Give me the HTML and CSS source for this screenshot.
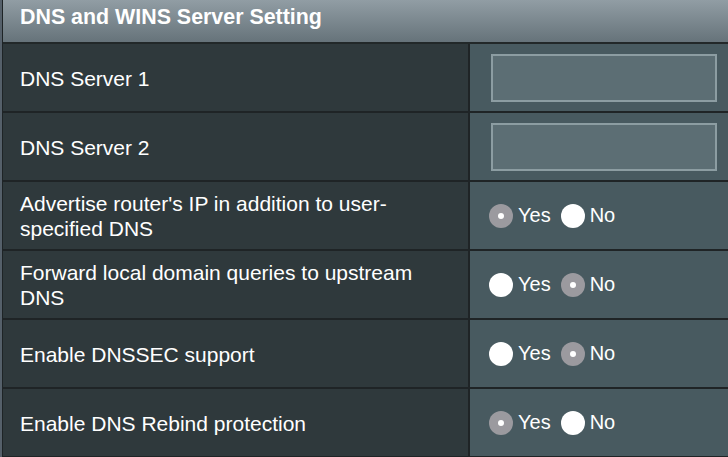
FILE: index.html
```html
<!DOCTYPE html>
<html>
<head>
<meta charset="utf-8">
<link rel="stylesheet" href="styles.css">
</head>
<body>
<div class="frame">
  <div class="panel">
    <div class="header">DNS and WINS Server Setting</div>
    <div class="row">
      <div class="label">DNS Server 1</div>
      <div class="field"><div class="input"></div></div>
    </div>
    <div class="row">
      <div class="label">DNS Server 2</div>
      <div class="field"><div class="input"></div></div>
    </div>
    <div class="row">
      <div class="label">Advertise router's IP in addition to user-specified DNS</div>
      <div class="field">
        <span class="radio checked"></span><span class="opt">Yes</span>
        <span class="radio"></span><span class="opt">No</span>
      </div>
    </div>
    <div class="row">
      <div class="label">Forward local domain queries to upstream DNS</div>
      <div class="field">
        <span class="radio"></span><span class="opt">Yes</span>
        <span class="radio checked"></span><span class="opt">No</span>
      </div>
    </div>
    <div class="row">
      <div class="label">Enable DNSSEC support</div>
      <div class="field">
        <span class="radio"></span><span class="opt">Yes</span>
        <span class="radio checked"></span><span class="opt">No</span>
      </div>
    </div>
    <div class="row">
      <div class="label">Enable DNS Rebind protection</div>
      <div class="field">
        <span class="radio checked"></span><span class="opt">Yes</span>
        <span class="radio"></span><span class="opt">No</span>
      </div>
    </div>
  </div>
</div>
</body>
</html>
```

FILE: styles.css
```css
html, body {
  margin: 0;
  padding: 0;
  background: #2f393c;
}
body {
  width: 728px;
  height: 457px;
  overflow: hidden;
  font-family: "Liberation Sans", Arial, Helvetica, sans-serif;
  color: #ffffff;
}
.frame {
  padding-left: 2px;
  background: #55606a;
  height: 457px;
}
.panel {
  border-left: 1px solid #1e2426;
  background: #2f393c;
  height: 457px;
}
.header {
  height: 44px;
  box-sizing: border-box;
  padding-left: 17px;
  padding-top: 5px;
  font-size: 21.4px;
  line-height: 24px;
  font-weight: bold;
  background: linear-gradient(to bottom, #919da4 0%, #66737a 100%);
  border-bottom: 2px solid #222829;
}
.row {
  display: grid;
  grid-template-columns: 465px 1fr;
  height: 69px;
  box-sizing: border-box;
  border-bottom: 2px solid #1f2426;
}
.label {
  display: flex;
  align-items: center;
  padding-left: 17px;
  padding-right: 40px;
  padding-top: 1px;
  font-size: 21px;
  line-height: 25px;
  background: #2f393c;
}
.field {
  display: flex;
  align-items: center;
  background: #485a60;
  border-left: 2px solid #1f2426;
  padding-left: 19px;
}
.input {
  margin-left: 2px;
  width: 226px;
  height: 48px;
  box-sizing: border-box;
  border: 2px solid #8c9da2;
  background: #5c6e74;
}
.radio {
  width: 24px;
  height: 24px;
  border-radius: 50%;
  background: #ffffff;
  position: relative;
  flex: none;
}
.radio.checked {
  background: #9b9a9f;
}
.radio.checked::after {
  content: "";
  position: absolute;
  left: 9px;
  top: 9px;
  width: 6px;
  height: 6px;
  border-radius: 50%;
  background: #ffffff;
}
.opt {
  font-size: 20px;
  margin-left: 5px;
  margin-right: 10px;
}
```
